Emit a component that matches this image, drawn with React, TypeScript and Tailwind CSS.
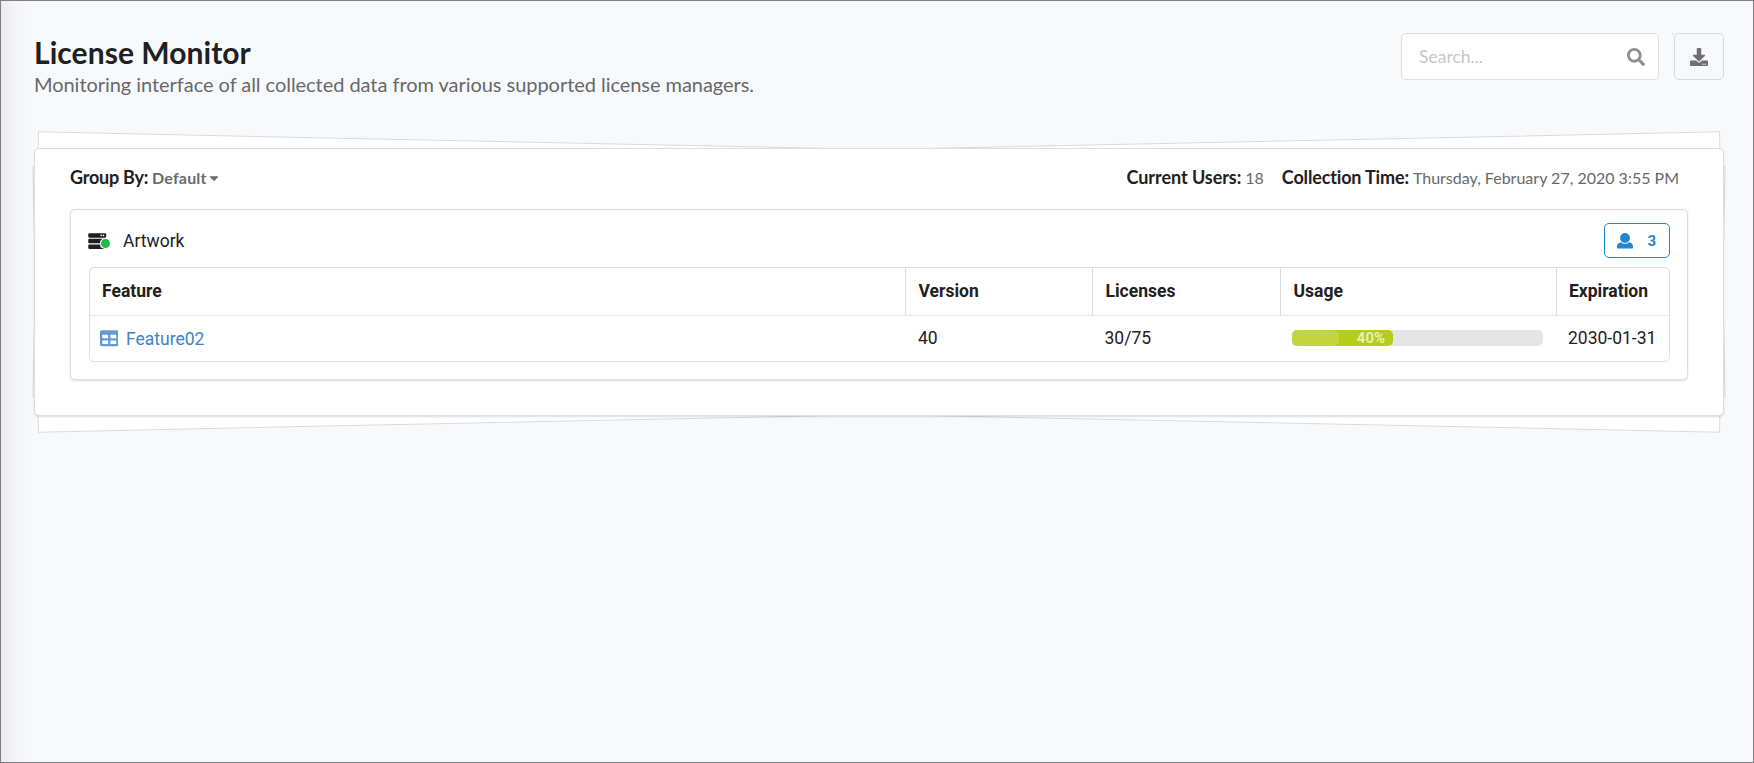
import { FaCaretDown, FaDownload, FaSearch, FaServer, FaTable } from 'react-icons/fa';

const features = [
  {
    name: 'Feature02',
    version: '40',
    inUse: 30,
    total: 75,
    expiration: '2030-01-31',
  },
];

const columns = ['Feature', 'Version', 'Licenses', 'Usage', 'Expiration'];

const rowGrid = 'grid grid-cols-[816px_187px_188px_276px_1fr]';

function UserIcon({ className }: { className?: string }) {
  return (
    <svg viewBox="0 0 16 16" fill="currentColor" className={className}>
      <circle cx="8" cy="5" r="4.9" />
      <path d="M4.2 9.2C5.2 10.3 6.5 10.8 8 10.8s2.8-.5 3.8-1.6c2.5.2 4.2 1.900 4.200 4.300v.9c0 .7-.5 1.200-1.200 1.200H1.200C.5 15.600 0 15.100 0 14.400v-.9C0 11.100 1.700 9.400 4.200 9.200z" />
    </svg>
  );
}

function Header() {
  return (
    <header className="flex justify-between h-[47px] -mr-[4px]">
      <div>
        <h1 className="mt-px text-[30px] leading-[36px] tracking-[0.06px] font-bold text-[#1f2021]">
          License Monitor
        </h1>
        <p className="mt-[2px] text-[20px] leading-[24px] tracking-[-0.045px] text-[#67696b] whitespace-nowrap">
          Monitoring interface of all collected data from various supported license managers.
        </p>
      </div>
      <div className="flex">
        <div className="flex items-center w-[258px] h-[47px] pl-[17px] pr-[13px] bg-white border border-[#dededf] rounded-[5px]">
          <input
            type="text"
            placeholder="Search..."
            className="flex-1 min-w-0 pt-[2px] text-[17.5px] outline-none placeholder:text-[#c7c7c8]"
          />
          <FaSearch className="w-[18px] h-[18px] text-[#8f8f90]" />
        </div>
        <span className="ml-[13px] w-[2px] h-[2px] bg-[#e0e1e3]" />
        <button className="flex items-center justify-center w-[50px] h-[47px] border border-[#d8d9db] rounded-[5px]">
          <FaDownload className="w-[18px] h-[18px] text-[#6f7072]" />
        </button>
      </div>
    </header>
  );
}

function Toolbar() {
  return (
    <div className="flex items-baseline justify-between h-[60px] pt-[15px] pr-[9px] text-[18px] leading-[27px]">
      <div className="flex items-baseline gap-[4px]">
        <span className="font-bold tracking-[-0.25px] text-[#1f2021]">Group By:</span>
        <button className="flex items-center text-[16px] tracking-[0.2px] font-bold text-[#6a6b6c]">
          Default
          <FaCaretDown className="w-[14px] h-[14px]" />
        </button>
      </div>
      <div className="flex items-baseline gap-[4px]">
        <span className="font-bold tracking-[-0.06px] text-[#1f2021]">Current Users:</span>
        <span className="text-[16px] text-[#67696b]">18</span>
        <span className="ml-[14px] font-bold tracking-[-0.15px] text-[#1f2021]">Collection Time:</span>
        <span className="text-[16px] text-[#67696b]">Thursday, February 27, 2020 3:55 PM</span>
      </div>
    </div>
  );
}

function UsageBar({ percent }: { percent: number }) {
  return (
    <div className="-mt-px w-[251px] h-[16px] bg-[#e5e5e5] rounded-[5px]">
      <div
        className="relative flex items-center justify-end h-full pr-[8px] bg-[#b5cc18] rounded-[5px]"
        style={{ width: `${percent + 0.3}%` }}
      >
        <div className="absolute left-0 top-0 w-[47px] h-full bg-white/18 rounded-[5px]" />
        <span className="text-[15px] leading-[16px] font-bold text-white/70">{percent}%</span>
      </div>
    </div>
  );
}

function FeatureTable() {
  return (
    <div className="h-[95px] border border-[#dededf] rounded-[5px] font-[Roboto,sans-serif] text-[17.5px] text-[#1f2021]">
      <div className={`${rowGrid} h-[48px] border-b border-[#e8e8e9]`}>
        {columns.map((column) => (
          <div
            key={column}
            className="flex items-center pl-[12.5px] font-bold border-r border-[#dededf] first:pl-[12px] last:pl-[12px] last:border-r-0"
          >
            {column}
          </div>
        ))}
      </div>
      {features.map((feature) => (
        <div key={feature.name} className={`${rowGrid} h-[45px] items-center`}>
          <div className="flex items-center gap-[8px] pl-[9.5px] text-[#4183c4]">
            <FaTable className="w-[18.5px] h-[18.5px] opacity-80" />
            <span className="pt-px">{feature.name}</span>
          </div>
          <div className="pl-[12px]">{feature.version}</div>
          <div className="pl-[11.5px]">
            {feature.inUse}/{feature.total}
          </div>
          <div className="pl-[11px]">
            <UsageBar percent={(feature.inUse / feature.total) * 100} />
          </div>
          <div className="pl-[11px]">{feature.expiration}</div>
        </div>
      ))}
    </div>
  );
}

function ServerCard() {
  return (
    <section className="h-[171px] pl-[18px] pr-[17px] pt-[13px] bg-white border border-[#dededf] rounded-[5px] shadow-[0_1px_2px_0_rgba(34,36,38,0.15)]">
      <div className="flex items-start justify-between h-[44px] font-[Roboto,sans-serif]">
        <div className="flex items-center h-[35px] -ml-px text-[17.5px] text-[#1f2021]">
          <div className="relative w-[20px] h-[18px]">
            <FaServer className="w-[18.5px] h-[18px]" />
            <span className="absolute left-[13px] top-[7.5px] w-[9px] h-[9px] rounded-full bg-[#21ba45] ring-1 ring-white" />
          </div>
          <span className="ml-[15px] pt-[2px]">Artwork</span>
        </div>
        <button className="flex items-center justify-between w-[66px] h-[35px] pl-[12px] pr-[13px] text-[15px] font-bold text-[#2185d0] border border-[#2185d0] rounded-[5px]">
          <UserIcon className="w-[16px] h-[16px]" />
          <span className="pt-px">3</span>
        </button>
      </div>
      <FeatureTable />
    </section>
  );
}

export default function App() {
  return (
    <div className="w-[1754px] h-[763px] overflow-hidden border border-[#808083] bg-[#f8f9fb] bg-[linear-gradient(to_right,#ececee,#f3f4f6_12px,#f8f9fb_32px)] px-[33px] pt-[32px] font-[Lato,sans-serif]">
      <Header />
      <div className="relative isolate mt-[68px] w-[1690px] h-[268px]">
        {/* Sheets peeking out from under the main card */}
        <div className="absolute inset-px rotate-[-1.2deg] bg-white border border-[#dadadb]" />
        <div className="absolute inset-px rotate-[1.2deg] bg-white border border-[#dadadb]" />
        <main className="relative h-full px-[35px] bg-white border border-[#dededf] rounded-[5px] shadow-[0_1px_2px_0_rgba(34,36,38,0.15)]">
          <Toolbar />
          <ServerCard />
        </main>
      </div>
    </div>
  );
}
